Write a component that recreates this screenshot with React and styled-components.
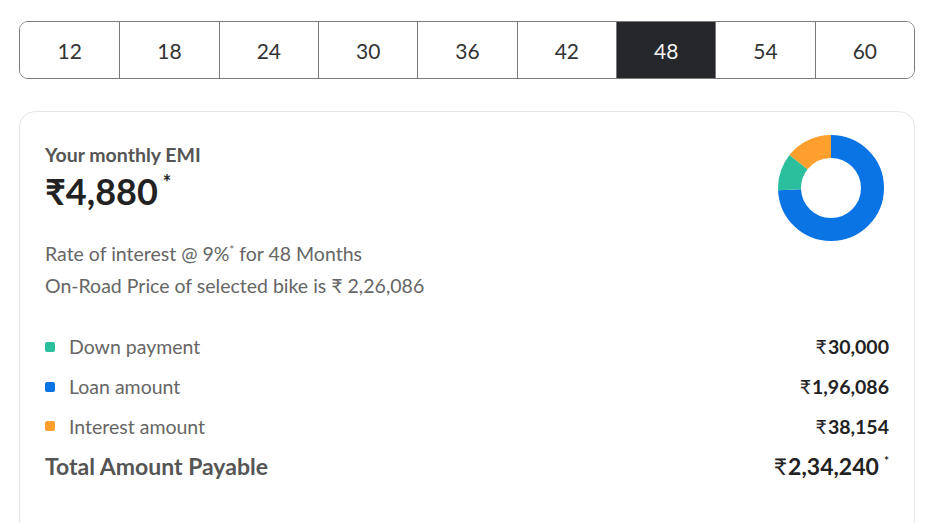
import React from 'react'
import styled, { createGlobalStyle } from 'styled-components'

const GlobalStyle = createGlobalStyle`
  body {
    margin: 0;
    background: #fff;
    font-family: Lato, "Open Sans", sans-serif;
    color: #333;
  }
`

const tenures = [12, 18, 24, 30, 36, 42, 48, 54, 60]

const breakdown = [
  { label: 'Down payment', value: '30,000', amount: 30000, color: '#2bbf9d' },
  { label: 'Loan amount', value: '1,96,086', amount: 196086, color: '#0b74e5' },
  { label: 'Interest amount', value: '38,154', amount: 38154, color: '#ff9f2e' },
]

const Page = styled.div`
  width: 896px;
  height: 523px;
  overflow: hidden;
  padding: 21px 0 0 19px;
  box-sizing: content-box;
`

const TenureBar = styled.div`
  display: grid;
  grid-template-columns: repeat(9, 1fr);
  height: 58px;
  border: 1px solid #7a7a7a;
  border-radius: 9px;
  overflow: hidden;
  box-sizing: border-box;
`

const TenureCell = styled.button`
  display: flex;
  align-items: center;
  justify-content: center;
  border: 0;
  border-left: ${(p) => (p.$first ? '0' : '1px solid #7a7a7a')};
  background: ${(p) => (p.$active ? '#25272b' : '#fff')};
  color: ${(p) => (p.$active ? '#f2f2f2' : '#333')};
  font-family: Lato, sans-serif;
  font-size: 21px;
  padding: 0;
  cursor: pointer;
`

const Card = styled.section`
  margin-top: 32px;
  border: 1px solid #e6e6e6;
  border-radius: 16px;
  padding: 31px 25px 0 25px;
  height: 440px;
  box-sizing: border-box;
`

const Head = styled.div`
  display: flex;
  justify-content: space-between;
  align-items: flex-start;
`

const Caption = styled.div`
  font-size: 19.5px;
  line-height: 23px;
  font-weight: 700;
  color: #555;
`

const Emi = styled.div`
  font-size: 36px;
  font-weight: 700;
  color: #222;
  line-height: 44px;
  margin-top: -6px;
  sup {
    font-size: 20px;
    vertical-align: 15px;
    margin-left: 5px;
  }
`

const Donut = styled.svg`
  width: 106px;
  height: 106px;
  margin: -8px 5px -30px 0;
`

const Note = styled.p`
  margin: 0;
  font-size: 19.5px;
  color: #666;
  line-height: 32px;
  sup {
    font-size: 11px;
    vertical-align: 7px;
  }
`

const Notes = styled.div`
  margin-top: 21px;
`

const Rows = styled.div`
  margin-top: 25px;
  display: flex;
  flex-direction: column;
`

const Row = styled.div`
  display: flex;
  justify-content: space-between;
  align-items: center;
  height: 39.7px;
`

const Label = styled.span`
  display: flex;
  align-items: center;
  gap: 14px;
  font-size: ${(p) => (p.$total ? '23px' : '19.5px')};
  font-weight: ${(p) => (p.$total ? 700 : 400)};
  color: ${(p) => (p.$total ? '#555' : '#666')};
`

const Dot = styled.i`
  width: 10px;
  height: 10px;
  border-radius: 2px;
  background: ${(p) => p.$color};
`

const Value = styled.span`
  font-size: ${(p) => (p.$total ? '23px' : '19.5px')};
  font-weight: 700;
  color: #222;
  sup {
    font-size: 12px;
    vertical-align: 10px;
    margin-left: 5px;
  }
`

const Rupee = styled.span`
  font-weight: 400;
  margin-right: 1px;
`

const DonutChart = ({ items }) => {
  const total = items.reduce((s, i) => s + i.amount, 0)
  const r = 41.5
  const c = 2 * Math.PI * r
  // loan first from 12 o'clock, then down payment, then interest
  const order = [items[1], items[0], items[2]]
  let offset = 0
  return (
    <Donut viewBox="0 0 106 106">
      <g transform="rotate(-90 53 53)">
        {order.map((it) => {
          const len = (it.amount / total) * c
          const seg = (
            <circle
              key={it.label}
              cx="53"
              cy="53"
              r={r}
              fill="none"
              stroke={it.color}
              strokeWidth="23"
              strokeDasharray={`${len} ${c - len}`}
              strokeDashoffset={-offset}
            />
          )
          offset += len
          return seg
        })}
      </g>
    </Donut>
  )
}

const App = () => {
  return (
    <Page>
      <GlobalStyle />
      <TenureBar>
        {tenures.map((t, idx) => (
          <TenureCell key={t} $first={idx === 0} $active={t === 48}>
            {t}
          </TenureCell>
        ))}
      </TenureBar>
      <Card>
        <Head>
          <div>
            <Caption>Your monthly EMI</Caption>
            <Emi>
              ₹4,880<sup>*</sup>
            </Emi>
          </div>
          <DonutChart items={breakdown} />
        </Head>
        <Notes>
          <Note>
            Rate of interest @ 9%<sup>*</sup> for 48 Months
          </Note>
          <Note>On-Road Price of selected bike is ₹ 2,26,086</Note>
        </Notes>
        <Rows>
          {breakdown.map((b) => (
            <Row key={b.label}>
              <Label>
                <Dot $color={b.color} />
                {b.label}
              </Label>
              <Value>
                <Rupee>₹</Rupee>
                {b.value}
              </Value>
            </Row>
          ))}
          <Row>
            <Label $total>Total Amount Payable</Label>
            <Value $total>
              <Rupee>₹</Rupee>2,34,240<sup>*</sup>
            </Value>
          </Row>
        </Rows>
      </Card>
    </Page>
  )
}

export default App
